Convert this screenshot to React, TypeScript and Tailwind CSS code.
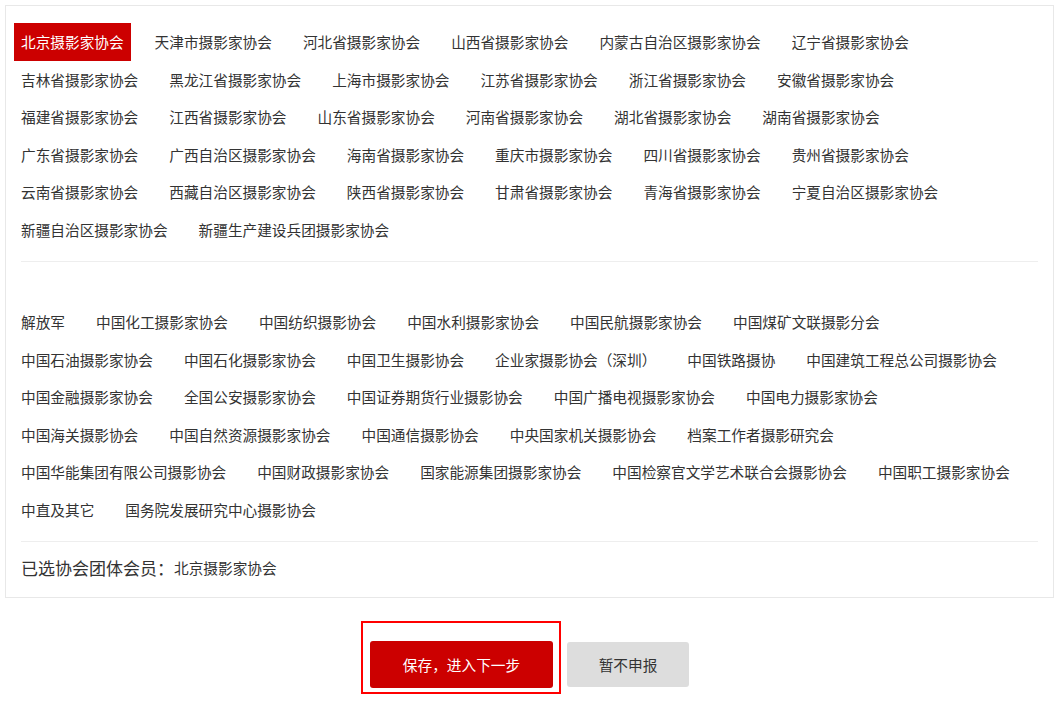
import { useState } from "react"

const provinceGroups = [
  "北京摄影家协会",
  "天津市摄影家协会",
  "河北省摄影家协会",
  "山西省摄影家协会",
  "内蒙古自治区摄影家协会",
  "辽宁省摄影家协会",
  "吉林省摄影家协会",
  "黑龙江省摄影家协会",
  "上海市摄影家协会",
  "江苏省摄影家协会",
  "浙江省摄影家协会",
  "安徽省摄影家协会",
  "福建省摄影家协会",
  "江西省摄影家协会",
  "山东省摄影家协会",
  "河南省摄影家协会",
  "湖北省摄影家协会",
  "湖南省摄影家协会",
  "广东省摄影家协会",
  "广西自治区摄影家协会",
  "海南省摄影家协会",
  "重庆市摄影家协会",
  "四川省摄影家协会",
  "贵州省摄影家协会",
  "云南省摄影家协会",
  "西藏自治区摄影家协会",
  "陕西省摄影家协会",
  "甘肃省摄影家协会",
  "青海省摄影家协会",
  "宁夏自治区摄影家协会",
  "新疆自治区摄影家协会",
  "新疆生产建设兵团摄影家协会",
]

const industryGroups = [
  "解放军",
  "中国化工摄影家协会",
  "中国纺织摄影协会",
  "中国水利摄影家协会",
  "中国民航摄影家协会",
  "中国煤矿文联摄影分会",
  "中国石油摄影家协会",
  "中国石化摄影家协会",
  "中国卫生摄影协会",
  "企业家摄影协会（深圳）",
  "中国铁路摄协",
  "中国建筑工程总公司摄影协会",
  "中国金融摄影家协会",
  "全国公安摄影家协会",
  "中国证券期货行业摄影协会",
  "中国广播电视摄影家协会",
  "中国电力摄影家协会",
  "中国海关摄影协会",
  "中国自然资源摄影家协会",
  "中国通信摄影协会",
  "中央国家机关摄影协会",
  "档案工作者摄影研究会",
  "中国华能集团有限公司摄影协会",
  "中国财政摄影家协会",
  "国家能源集团摄影家协会",
  "中国检察官文学艺术联合会摄影协会",
  "中国职工摄影家协会",
  "中直及其它",
  "国务院发展研究中心摄影协会",
]

type GroupListProps = {
  items: string[]
  selected: string
  onSelect: (name: string) => void
}

function GroupList({ items, selected, onSelect }: GroupListProps) {
  return (
    <div className="flex flex-wrap gap-x-[17px] pr-[17px]">
      {items.map((name) => (
        <span
          key={name}
          onClick={() => onSelect(name)}
          className={
            name === selected
              ? "h-[37.6px] cursor-pointer bg-[#cc0000] px-[7px] text-[14.67px] leading-[37.6px] text-white"
              : "h-[37.6px] cursor-pointer px-[7px] text-[14.67px] leading-[37.6px] text-[#333]"
          }
        >
          {name}
        </span>
      ))}
    </div>
  )
}

export default function App() {
  const [selected, setSelected] = useState("北京摄影家协会")

  return (
    <div className="min-h-screen bg-white pt-[5px] font-['Noto_Sans_CJK_SC','Noto_Sans',sans-serif] text-[#333]">
      <div className="ml-[5px] w-[1049px] border border-[#e8e8e8] px-[8px] pt-[17px] pb-[10px]">
        <GroupList items={provinceGroups} selected={selected} onSelect={setSelected} />
        <div className="mx-[7px] mt-[12.5px] h-px bg-[#eeeeee]" />

        <div className="pt-[41px]">
          <GroupList items={industryGroups} selected={selected} onSelect={setSelected} />
        </div>
        <div className="mx-[7px] mt-[12.5px] h-px bg-[#eeeeee]" />

        <div className="mt-[7px] flex h-[38px] items-center px-[7px]">
          <span className="text-[17px]">已选协会团体会员：</span>
          <span className="text-[14.67px]">{selected}</span>
        </div>
      </div>

      <div className="mt-[23px] flex items-start justify-center pr-[5px]">
        <div className="border-2 border-[#ff0000] pt-[18px] pr-[6px] pb-[4px] pl-[7px]">
          <button className="h-[47px] w-[183px] rounded-[3px] bg-[#cc0000] text-[14.67px] text-white">
            保存，进入下一步
          </button>
        </div>
        <button className="mt-[21px] ml-[6px] h-[45px] w-[122px] rounded-[3px] bg-[#dddddd] text-[14.67px] text-[#333]">
          暂不申报
        </button>
      </div>
    </div>
  )
}
